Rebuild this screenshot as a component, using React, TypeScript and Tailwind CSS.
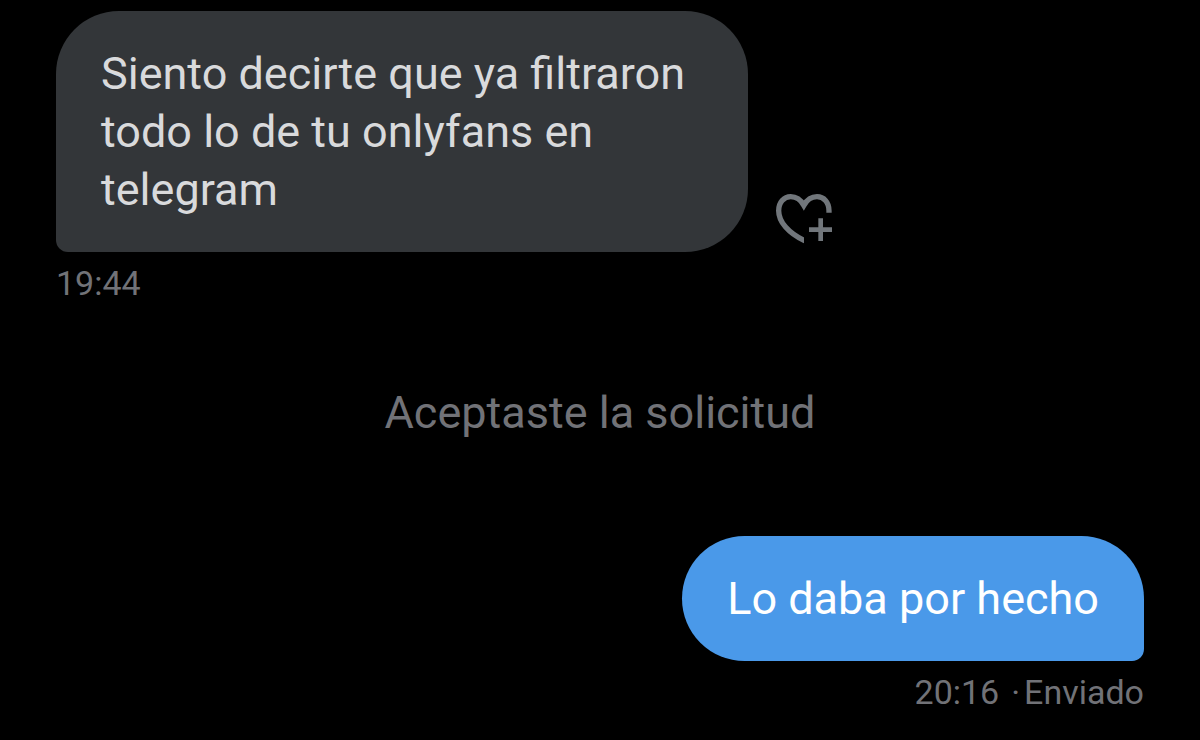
import React from "react";

function HeartPlusIcon() {
  return (
    <svg viewBox="0 0 168 150" className="h-[50px] w-14" fill="none" aria-hidden="true">
      <defs>
        <clipPath id="heart-open-corner">
          <path d="M0 0 H168 V56 H84 V150 H0 Z" />
        </clipPath>
      </defs>
      <path
        clipPath="url(#heart-open-corner)"
        stroke="#71767b"
        strokeWidth="16"
        strokeMiterlimit="10"
        d="M159 62 V50 C159 24 143 8 123 8 C106 8 93 17 83.5 34 C74 17 61 8 44 8 C24 8 8 25 8 50 C8 84 38 117 84 139 L100 146"
      />
      <path d="M134 73 V141 M99 107 H168" stroke="#71767b" strokeWidth="14" />
    </svg>
  );
}

type BubbleProps = { text: string; sent?: boolean };

function Bubble({ text, sent = false }: BubbleProps) {
  const tone = sent
    ? "rounded-br-xl bg-[#4a99e9] text-white"
    : "rounded-bl-xl bg-[#333639] text-[#d9dadc]";
  return (
    <p className={`max-w-[692px] rounded-[63px] px-[45px] pt-[34px] pb-[33px] text-[45px] leading-[58px] ${tone}`}>
      {text}
    </p>
  );
}

export default function App() {
  return (
    <main className="flex min-h-screen flex-col bg-black px-14 pt-[11px] font-['Roboto',sans-serif] text-[#717277]">
      <section>
        <div className="flex items-end gap-7">
          <Bubble text="Siento decirte que ya filtraron todo lo de tu onlyfans en telegram" />
          <button type="button" aria-label="Reaccionar" className="mb-2 shrink-0">
            <HeartPlusIcon />
          </button>
        </div>
        <time className="mt-2 block text-[34px] leading-[46px]">19:44</time>
      </section>
      <p className="mt-[78px] text-center text-[45px] leading-[58px]">Aceptaste la solicitud</p>
      <section className="mt-[94px] flex flex-col items-end">
        <Bubble sent text="Lo daba por hecho" />
        <p className="mt-2 flex gap-1 text-[34px] leading-[46px]">
          <time className="mr-2">20:16</time>
          <span>·</span>
          <span>Enviado</span>
        </p>
      </section>
    </main>
  );
}
